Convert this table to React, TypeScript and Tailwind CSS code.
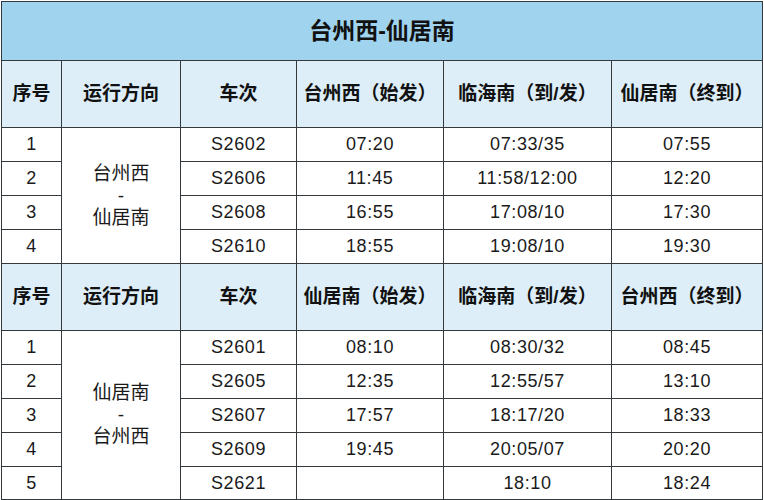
const font = '"Liberation Sans", "Noto Sans CJK SC", sans-serif';

type Row = { no: number; train: string; start: string; mid: string; end: string };

const block1: Row[] = [
  { no: 1, train: 'S2602', start: '07:20', mid: '07:33/35', end: '07:55' },
  { no: 2, train: 'S2606', start: '11:45', mid: '11:58/12:00', end: '12:20' },
  { no: 3, train: 'S2608', start: '16:55', mid: '17:08/10', end: '17:30' },
  { no: 4, train: 'S2610', start: '18:55', mid: '19:08/10', end: '19:30' },
];

const block2: Row[] = [
  { no: 1, train: 'S2601', start: '08:10', mid: '08:30/32', end: '08:45' },
  { no: 2, train: 'S2605', start: '12:35', mid: '12:55/57', end: '13:10' },
  { no: 3, train: 'S2607', start: '17:57', mid: '18:17/20', end: '18:33' },
  { no: 4, train: 'S2609', start: '19:45', mid: '20:05/07', end: '20:20' },
  { no: 5, train: 'S2621', start: '', mid: '18:10', end: '18:24' },
];

const cell = 'border border-[#34393e] text-center align-middle p-0';
const head = `${cell} bg-[#ddeef8] font-bold text-[19px] text-[#111]`;
const data = `${cell} text-[18px] text-[#1a1a1a] tracking-[0.6px]`;

function HeaderRow({ from, to }: { from: string; to: string }) {
  return (
    <tr className="h-[67px]">
      <td className={head}>序号</td>
      <td className={head}>运行方向</td>
      <td className={head}>车次</td>
      <td className={head}>{from}（始发）</td>
      <td className={head}>临海南（到/发）</td>
      <td className={head}>{to}（终到）</td>
    </tr>
  );
}

function Block({ rows, from, to }: { rows: Row[]; from: string; to: string }) {
  return (
    <>
      <HeaderRow from={from} to={to} />
      {rows.map((r, i) => (
        <tr key={r.train} className={i === 4 ? 'h-[33px]' : 'h-[34px]'}>
          <td className={data}>{r.no}</td>
          {i === 0 && (
            <td className={`${cell} text-[19px] text-[#1a1a1a] leading-[22px]`} rowSpan={rows.length}>
              <div>{from}</div>
              <div>-</div>
              <div>{to}</div>
            </td>
          )}
          <td className={data}>{r.train}</td>
          <td className={data}>{r.start}</td>
          <td className={data}>{r.mid}</td>
          <td className={data}>{r.end}</td>
        </tr>
      ))}
    </>
  );
}

export default function App() {
  return (
    <div className="w-[764px] h-[500px] bg-white pt-[1px] pl-[1px]" style={{ fontFamily: font }}>
      <table className="table-fixed border-collapse w-[761px]">
        <colgroup>
          <col className="w-[60px]" />
          <col className="w-[119px]" />
          <col className="w-[116px]" />
          <col className="w-[147px]" />
          <col className="w-[168px]" />
          <col className="w-[151px]" />
        </colgroup>
        <tbody>
          <tr className="h-[59px]">
            <td colSpan={6} className={`${cell} bg-[#9fd3ee] font-bold text-[23px] text-[#111]`}>
              台州西-仙居南
            </td>
          </tr>
          <Block rows={block1} from="台州西" to="仙居南" />
          <Block rows={block2} from="仙居南" to="台州西" />
        </tbody>
      </table>
    </div>
  );
}
